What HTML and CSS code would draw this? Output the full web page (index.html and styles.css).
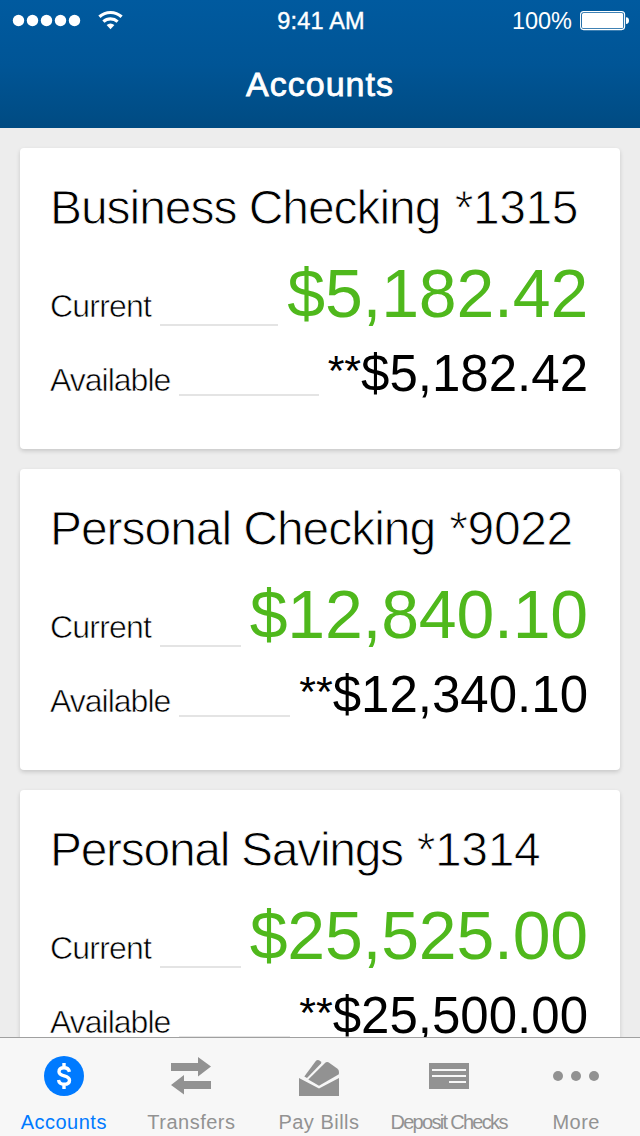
FILE: index.html
```html
<!DOCTYPE html>
<html lang="en">
  <head>
    <meta charset="UTF-8" />
    <meta name="viewport" content="width=device-width, initial-scale=1.0" />
    <title>Accounts</title>
    <link rel="stylesheet" href="styles.css">
  </head>
  <body>
    <header>
      <div class="status-bar">
        <div class="signal">
          <svg width="112" height="22" viewBox="0 0 112 22" fill="#fff">
            <circle cx="6.5" cy="10.5" r="5.7" />
            <circle cx="20.5" cy="10.5" r="5.7" />
            <circle cx="34.5" cy="10.5" r="5.7" />
            <circle cx="48.5" cy="10.5" r="5.7" />
            <circle cx="62.5" cy="10.5" r="5.7" />
            <path d="M87.4 6.8a16.5 16.5 0 0 1 22.2 0M91.4 11.6a10.6 10.6 0 0 1 14.2 0" fill="none" stroke="#fff" stroke-width="3.2" />
            <path d="M94.6 15a6.2 6.2 0 0 1 7.8 0L98.5 19.2z" />
          </svg>
        </div>
        <div class="time">9:41 AM</div>
        <div class="battery">
          <span>100%</span>
          <svg width="50" height="20" viewBox="0 0 50 20">
            <rect x="0.6" y="0.6" width="44" height="18" rx="3" fill="none" stroke="#fff" stroke-width="1.1" />
            <rect x="2" y="2" width="41.2" height="15.2" rx="1.5" fill="#fff" />
            <path d="M46 6.2q3 0 3 3.4t-3 3.4z" fill="#fff" />
          </svg>
        </div>
      </div>
      <h1>Accounts</h1>
    </header>

    <main>
      <div class="card">
        <h2>Business Checking <span class="number">*1315</span></h2>
        <div class="row current">
          <span class="label">Current</span>
          <span class="line"></span>
          <span class="amount">$5,182.42</span>
        </div>
        <div class="row available">
          <span class="label">Available</span>
          <span class="line"></span>
          <span class="amount"><span class="stars">**</span>$5,182.42</span>
        </div>
      </div>
      <div class="card">
        <h2>Personal Checking <span class="number">*9022</span></h2>
        <div class="row current">
          <span class="label">Current</span>
          <span class="line"></span>
          <span class="amount">$12,840.10</span>
        </div>
        <div class="row available">
          <span class="label">Available</span>
          <span class="line"></span>
          <span class="amount"><span class="stars">**</span>$12,340.10</span>
        </div>
      </div>
      <div class="card">
        <h2 class="savings">Personal Savings <span class="number">*1314</span></h2>
        <div class="row current">
          <span class="label">Current</span>
          <span class="line"></span>
          <span class="amount">$25,525.00</span>
        </div>
        <div class="row available">
          <span class="label">Available</span>
          <span class="line"></span>
          <span class="amount"><span class="stars">**</span>$25,500.00</span>
        </div>
      </div>
    </main>

    <nav>
      <a href="#" class="tab active">
        <svg width="48" height="40" viewBox="0 0 48 40">
          <circle cx="24" cy="20" r="20" fill="#007aff" />
          <path d="M29.4 15.8C28.8 13 26.8 11.8 24 11.8c-3 0-5 1.4-5 3.9 0 5.400 10.500 3 10.500 8.500 0 2.700-2.300 4.100-5.300 4.100-3.200 0-5.200-1.500-5.700-4.300M24 7v5M24 28v5" fill="none" stroke="#fff" stroke-width="3.400" />
        </svg>
        <span>Accounts</span>
      </a>
      <a href="#" class="tab">
        <svg width="48" height="40" viewBox="0 0 48 40" fill="#929292">
          <path d="M4 7h27V1l13 9.5L31 20.5V15H4z" />
          <path d="M44 25H17v-6L4 29l13 9.5V33h27z" />
        </svg>
        <span>Transfers</span>
      </a>
      <a href="#" class="tab pay">
        <svg width="48" height="40" viewBox="0 0 48 40" fill="#929292">
          <path d="M4 22l20 10.5L44 22v18H4z" />
          <path d="M9.3 20.4L20.8 5q1.500-1.800 3.200-.7l1.800 1.200q1 .8.2 2L12 22z" />
          <path d="M13.300 23.500L29.500 7.400q2.500-2.300 5-.5L42.200 12.500q1.800 1.400 1.800 3.500l-.1 2.200L24 29.800z" />
        </svg>
        <span>Pay Bills</span>
      </a>
      <a href="#" class="tab tight">
        <svg width="48" height="40" viewBox="0 0 48 40">
          <path d="M4 7h40v26H4z" fill="#929292" />
          <path d="M7 14h34M7 20h34M24 26h17" stroke="#f7f7f7" stroke-width="2" />
        </svg>
        <span>Deposit Checks</span>
      </a>
      <a href="#" class="tab">
        <svg width="48" height="40" viewBox="0 0 48 40" fill="#929292">
          <circle cx="6" cy="20" r="5" />
          <circle cx="24" cy="20" r="5" />
          <circle cx="42" cy="20" r="5" />
        </svg>
        <span>More</span>
      </a>
    </nav>
  </body>
</html>
```
FILE: styles.css
```css
* {
  box-sizing: border-box;
}
body {
  margin: 0;
  height: 1136px;
  display: flex;
  flex-direction: column;
  overflow: hidden;
  background-color: #ededed;
  color: black;
  font-family: "Liberation Sans", Arial, sans-serif;
}
header {
  height: 128px;
  flex: none;
  background: linear-gradient(#005a9f, #005596 50%, #004b82);
  color: white;
}
.status-bar {
  display: grid;
  grid-template-columns: 1fr auto 1fr;
  align-items: center;
  height: 42px;
  padding: 0 10px 0 12px;
  font-size: 23.5px;
}
.signal,
.battery {
  display: flex;
  align-items: center;
}
.battery {
  justify-content: flex-end;
  gap: 8px;
}
.time {
  letter-spacing: 0.2px;
  -webkit-text-stroke: 0.4px white;
}
h1 {
  margin: 0;
  font-size: 34px;
  font-weight: normal;
  line-height: 84px;
  text-align: center;
  letter-spacing: 1px;
  -webkit-text-stroke: 0.8px white;
}
main {
  flex: 1;
  min-height: 0;
  overflow: hidden;
  padding: 20px;
}
.card {
  height: 301px;
  margin-bottom: 20px;
  padding: 31px 32px 0 30px;
  background-color: white;
  border-radius: 4px;
  box-shadow: 0 2px 4px rgba(0, 0, 0, 0.16);
}
/* the white stroke thins the letters down to a light weight */
h2 {
  margin: 0 0 16px;
  font-size: 48px;
  font-weight: normal;
  line-height: 58px;
  letter-spacing: -1.05px;
  white-space: nowrap;
  -webkit-text-stroke: 0.9px white;
}
.savings {
  letter-spacing: -1.3px;
}
.number {
  margin-left: 2px;
  letter-spacing: -0.4px;
}
.row {
  display: flex;
  align-items: baseline;
}
.label {
  font-size: 32px;
  letter-spacing: -0.8px;
  -webkit-text-stroke: 0.6px white;
}
.line {
  flex: 1;
  align-self: flex-end;
  height: 2px;
  margin: 0 9px 7px;
  background-color: #e4e4e4;
}
.current {
  margin-bottom: 10px;
}
.current .amount {
  font-size: 68px;
  line-height: 80px;
  letter-spacing: -0.2px;
  color: #4fb81c;
}
.available .label {
  letter-spacing: -1px;
}
.available .line {
  margin-bottom: 9px;
}
.available .amount {
  font-size: 51px;
  line-height: 62px;
}
.stars {
  font-size: 43px;
  line-height: 0;
  vertical-align: 6px;
}
nav {
  display: flex;
  flex: none;
  height: 99px;
  border-top: 1px solid #a0a0a0;
  background-color: #f7f7f7;
}
.tab {
  flex: 1 1 0;
  min-width: 0;
  display: flex;
  flex-direction: column;
  align-items: center;
  padding-top: 18px;
  color: #929292;
  font-size: 20px;
  letter-spacing: 0.5px;
  text-decoration: none;
  white-space: nowrap;
}
.tab span {
  margin-top: 15px;
}
.pay {
  padding-right: 2px;
}
.active {
  color: #007aff;
}
.tight {
  letter-spacing: -1.7px;
}
```
